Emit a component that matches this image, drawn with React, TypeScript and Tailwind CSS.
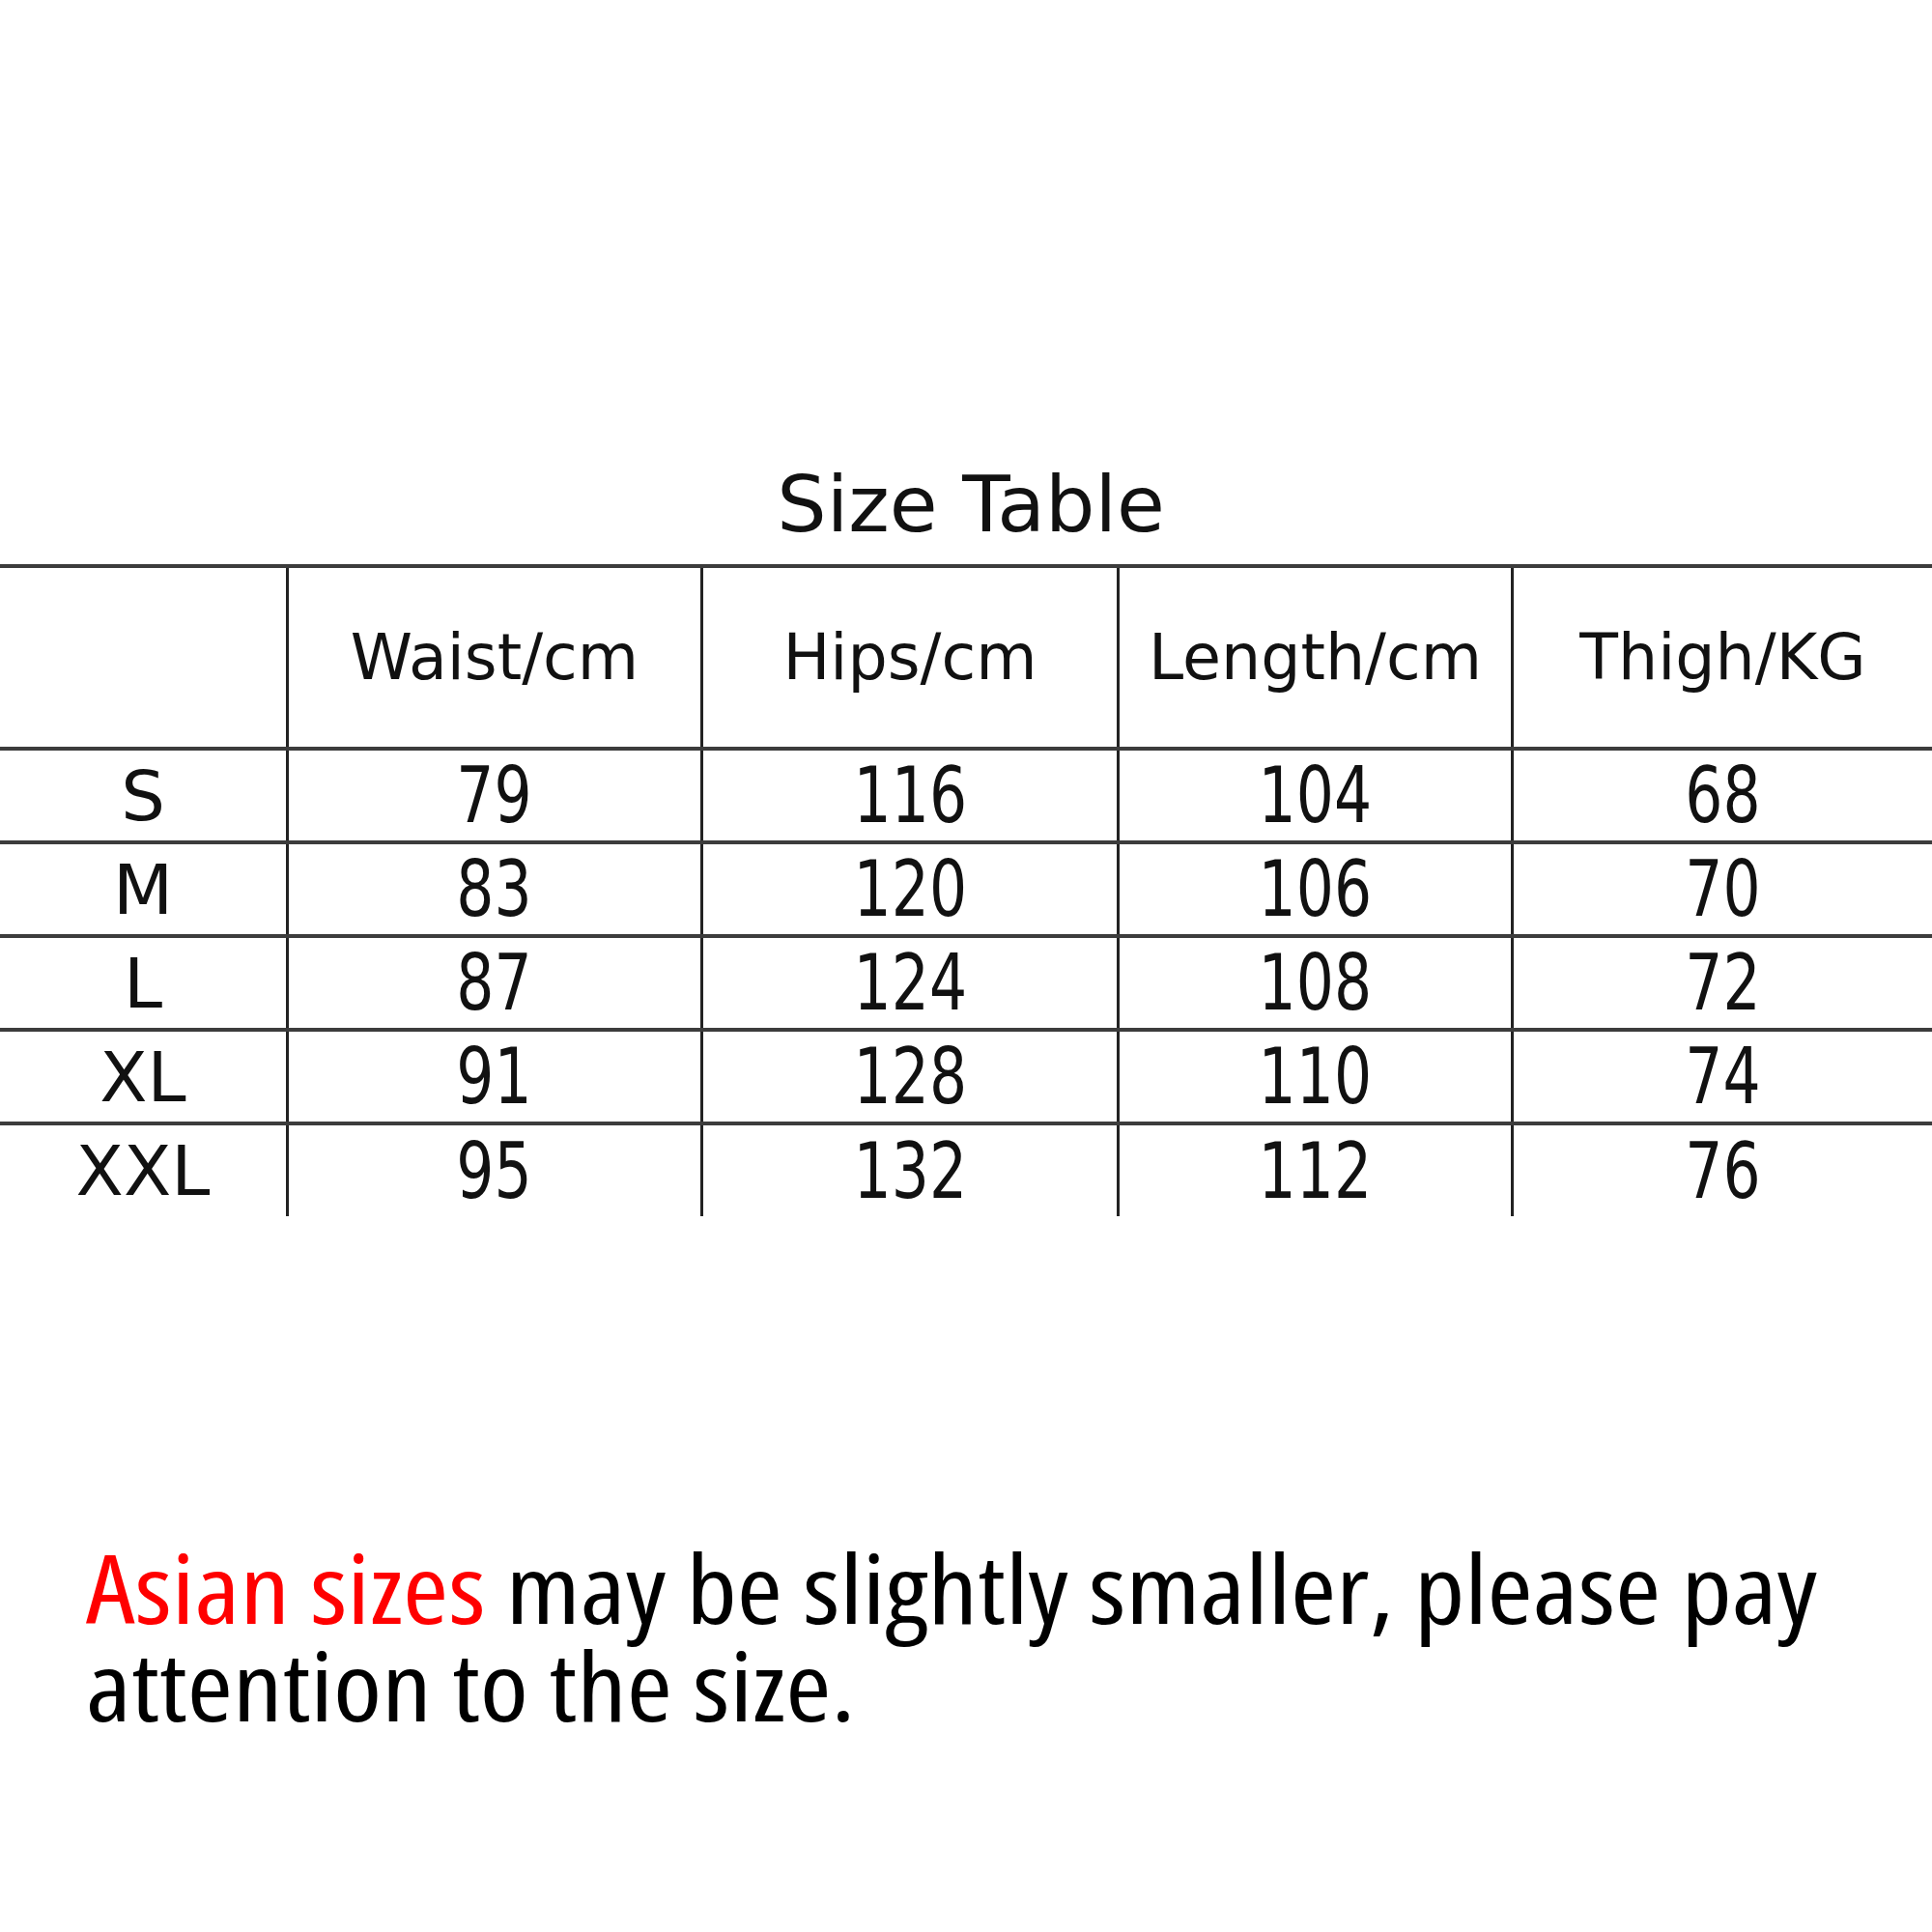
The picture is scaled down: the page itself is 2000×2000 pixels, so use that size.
import { FC } from 'react';

const headers = ['Waist/cm', 'Hips/cm', 'Length/cm', 'Thigh/KG'];

const rows = [
  ['S', '79', '116', '104', '68'],
  ['M', '83', '120', '106', '70'],
  ['L', '87', '124', '108', '72'],
  ['XL', '91', '128', '110', '74'],
  ['XXL', '95', '132', '112', '76'],
];

const cols = 'grid grid-cols-[296px_429px_431px_408px_1fr]';

const App: FC = () => {
  return (
    <div className="w-[2000px] h-[2000px] bg-white text-[#111] pt-[483px] font-['DejaVu_Sans',sans-serif]">
      <h1 className="pl-[10px] text-center text-[81px] leading-[79px] font-normal">Size Table</h1>

      <div className="mt-[22px]">
        {/* header row */}
        <div className={`${cols} h-[189px] border-t-4 border-[#3c3c3c]`}>
          <div />
          {headers.map((h) => (
            <div
              key={h}
              className="flex items-center justify-center border-l-[3px] border-[#222] text-[65px] leading-none"
            >
              {h}
            </div>
          ))}
        </div>

        {rows.map((row, i) => (
          <div
            key={row[0]}
            className={`${cols} ${i === rows.length - 1 ? 'h-[98px]' : 'h-[97px]'} border-t-4 border-[#3c3c3c]`}
          >
            <div className="flex items-center justify-center text-[72px] leading-none">{row[0]}</div>
            {row.slice(1).map((v, j) => (
              <div
                key={j}
                className="flex items-center justify-center border-l-[3px] border-[#222]"
              >
                <span className="inline-block scale-x-[0.76] text-[81px] leading-none">{v}</span>
              </div>
            ))}
          </div>
        ))}
      </div>

      <div className="mt-[334px] pl-[89px]">
        <p className="w-fit origin-left scale-x-[1.165] whitespace-nowrap font-['Open_Sans',sans-serif] font-stretch-[75%] text-[98px] leading-[101px] text-black">
          <span className="text-[#ff0000]">Asian sizes</span> may be slightly smaller, please pay
          <br />
          attention to the size.
        </p>
      </div>
    </div>
  );
};

export default App;
